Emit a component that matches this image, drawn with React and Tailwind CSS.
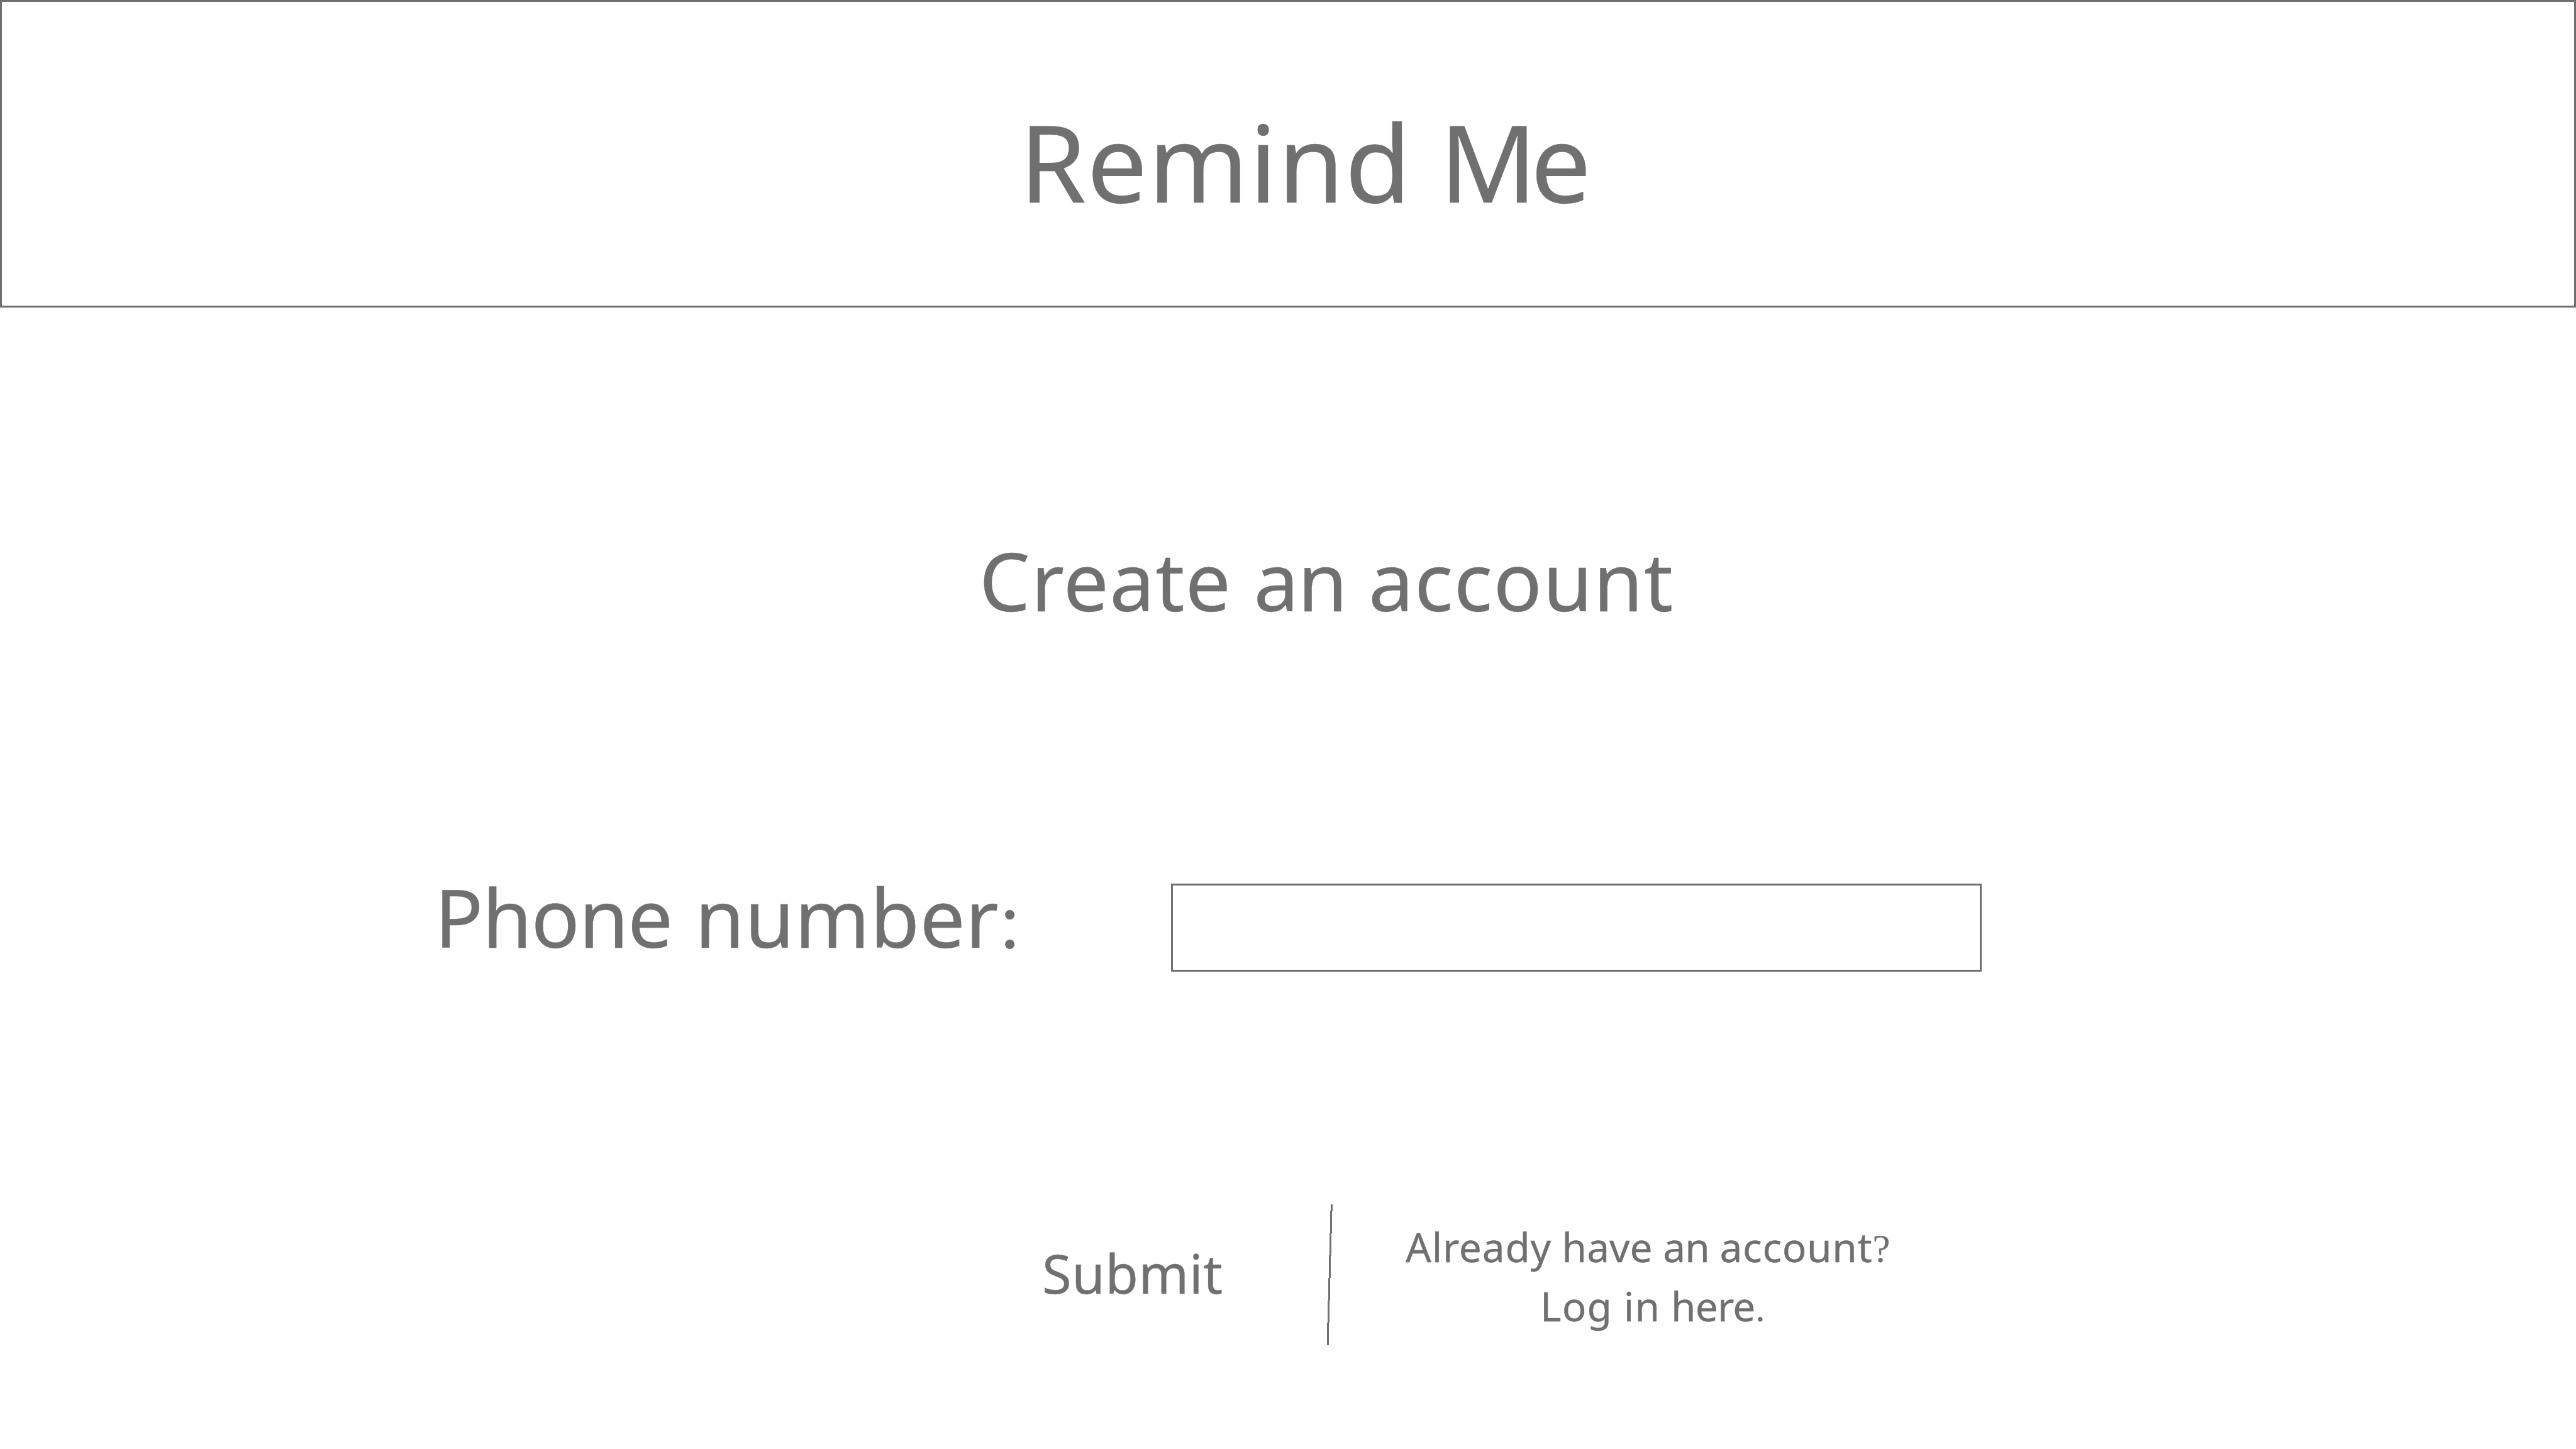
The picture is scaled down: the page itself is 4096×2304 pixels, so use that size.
/* ============================================================
 * REMIND ME: CREATE ACCOUNT
 * ============================================================ */

function Serif({ children }) {
  return (
    <span className="font-['Liberation_Serif',serif] leading-[0] [-webkit-text-stroke:0]">
      {children}
    </span>
  );
}

function Header() {
  return (
    <header className="h-[489px] shrink-0 border-[3px] border-[#707070] bg-white">
      <h1 className="mt-[168px] ml-[1618px] text-[170.7px] leading-none whitespace-nowrap">
        <span className="tracking-[0.007em]">Remind</span>{" "}
        <span className="tracking-[-0.06em]">M</span>e
      </h1>
    </header>
  );
}

function PhoneField() {
  return (
    <div className="mt-[407px] flex items-start">
      <label
        htmlFor="phone"
        className="ml-[691px] w-[1171px] text-[128px] leading-none [word-spacing:3px] whitespace-nowrap"
      >
        <span className="tracking-[-0.012em]">Phone</span>{" "}
        <span className="tracking-[0.002em]">number</span>
        <Serif>:</Serif>
      </label>
      <input
        id="phone"
        type="tel"
        className="mt-[11px] h-[140px] w-[1289px] border-[3px] border-[#707070] bg-white"
      />
    </div>
  );
}

function Actions() {
  return (
    <div className="mt-[370px] flex items-start">
      <button className="mt-[67px] ml-[1657px] w-[451px] text-left text-[85.3px] leading-none tracking-[0.006em]">
        Submit
      </button>
      <svg
        width="12"
        height="224"
        viewBox="0 0 12 224"
        shapeRendering="crispEdges"
        className="shrink-0"
      >
        <line x1="9.3" y1="0" x2="3" y2="224" stroke="#707070" strokeWidth="3" />
      </svg>
      <a className="mt-[21px] ml-[115px] text-[64px] leading-[93.5px] whitespace-nowrap">
        <span className="block">
          <span className="tracking-[0.012em]">Already</span> have{" "}
          <span className="tracking-[-0.015em]">an</span>{" "}
          <span className="tracking-[0.01em]">account</span>
          <Serif>?</Serif>
        </span>
        <span className="block pl-[214px]">
          <span className="tracking-[0.018em]">Log in</span>{" "}
          <span className="tracking-[-0.012em]">here</span>
          <Serif>.</Serif>
        </span>
      </a>
    </div>
  );
}

export default function App() {
  return (
    <div className="flex h-[2304px] w-[4096px] flex-col overflow-hidden bg-[#fefefe] font-['Noto_Sans',sans-serif] text-[#707070] [-webkit-text-stroke:0.02em]">
      <Header />
      <h2 className="mt-[370px] ml-[1557px] text-[128px] leading-none [word-spacing:2px] whitespace-nowrap">
        <span className="tracking-[0.01em]">Create</span>{" "}
        <span className="tracking-[-0.015em]">an</span>{" "}
        <span className="tracking-[0.01em]">account</span>
      </h2>
      <PhoneField />
      <Actions />
    </div>
  );
}
